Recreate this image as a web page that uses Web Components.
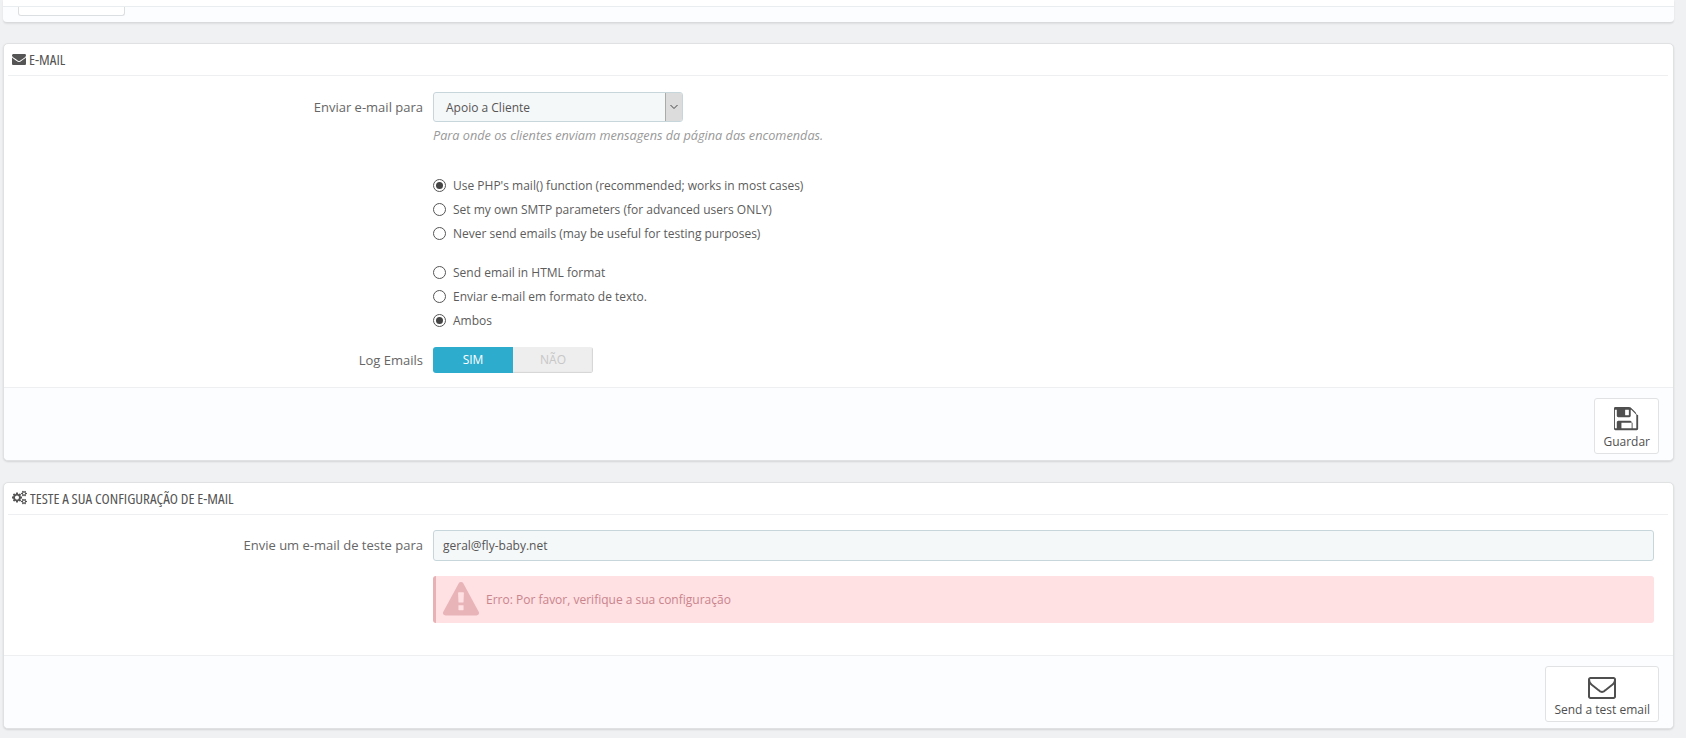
<!DOCTYPE html>
<html lang="pt">
<head>
<meta charset="utf-8">
<title>E-mail</title>
<style>
  html, body { margin: 0; background: #eff1f2; }
  body { font-family: "Open Sans", sans-serif; font-size: 12px; color: #555; height: 738px; overflow: hidden; }
  main { display: flex; flex-direction: column; padding: 0 12px 0 3px; }
</style>
</head>
<body>
<main>
  <top-strip></top-strip>

  <ps-panel style="margin-top:20px">
    <fa-icon slot="icon" name="envelope" size="14"></fa-icon>
    <span slot="title">E-mail</span>
    <form-row label="Enviar e-mail para" top="16">
      <fake-select value="Apoio a Cliente"></fake-select>
      <p class="help" style="margin:5px 0 0;font-style:italic;font-size:12.7px;line-height:17px;color:#999">Para onde os clientes enviam mensagens da página das encomendas.</p>
    </form-row>
    <form-row top="29">
      <radio-option checked>Use PHP's mail() function (recommended; works in most cases)</radio-option>
      <radio-option>Set my own SMTP parameters (for advanced users ONLY)</radio-option>
      <radio-option>Never send emails (may be useful for testing purposes)</radio-option>
    </form-row>
    <form-row top="15">
      <radio-option>Send email in HTML format</radio-option>
      <radio-option>Enviar e-mail em formato de texto.</radio-option>
      <radio-option checked>Ambos</radio-option>
    </form-row>
    <form-row label="Log Emails" top="15" bottom="14" lh="26">
      <yes-no></yes-no>
    </form-row>
    <ps-button slot="footer" icon="save" isize="26" ptop="7" gap="1">Guardar</ps-button>
  </ps-panel>

  <ps-panel style="margin-top:21px">
    <fa-icon slot="icon" name="cogs" size="15"></fa-icon>
    <span slot="title">Teste a sua configuração de e-mail</span>
    <form-row label="Envie um e-mail de teste para" top="15">
      <text-box value="geral@fly-baby.net"></text-box>
    </form-row>
    <form-row top="15" bottom="32">
      <error-alert>Erro: Por favor, verifique a sua configuração</error-alert>
    </form-row>
    <ps-button slot="footer" icon="envelope-o" isize="28" ptop="6" gap="0">Send a test email</ps-button>
  </ps-panel>
</main>

<script>
const ICONS = {
  envelope: ["0 0 1792 1792", "M1792 710v794q0 66-47 113t-113 47H160q-66 0-113-47T0 1504V710q44 49 101 87 362 246 497 345 57 42 92.5 65.5t94.5 48 110 24.5h2q51 0 110-24.5t94.5-48 92.5-65.5q170-123 498-345 57-39 100-87zm0-294q0 79-49 151t-122 123q-376 261-468 325-10 7-42.5 30.5t-54 38-52 32.5-57.5 27-50 9h-2q-23 0-50-9t-57.5-27-52-32.5-54-38T639 1015q-91-64-262-182.5T172 690q-62-42-117-115.5T0 438q0-78 41.5-130T160 256h1472q65 0 112.5 47t47.5 113z"],
  "envelope-o": ["0 0 1792 1792", "M1664 1504V736q-32 36-69 66-268 206-426 338-51 43-83 67t-86.5 48.5T897 1280h-2q-48 0-102.5-24.5t-86.5-48.5-83-67q-158-132-426-338-37-30-69-66v768q0 13 9.5 22.5T160 1536h1472q13 0 22.5-9.5t9.5-22.5zm0-1051v-24.5l-.5-13-3-12.5-5.5-9-9-7.5-14-2.5H160q-13 0-22.5 9.5T128 416q0 168 147 284 193 152 401 317 6 5 35 29.5t46 37.5 44.5 31.5T852 1143t43 9h2q20 0 43-9t50.5-27.5 44.5-31.5 46-37.5 35-29.5q208-165 401-317 54-43 100.5-115.5T1664 453zm128-37v1088q0 66-47 113t-113 47H160q-66 0-113-47T0 1504V416q0-66 47-113t113-47h1472q66 0 113 47t47 113z"],
  save: ["0 0 1792 1792", "M512 1536h768v-384H512v384zm896 0h128V640q0-14-10-38.5t-20-34.5l-281-281q-10-10-34-20t-39-10v416q0 40-28 68t-68 28H288q-40 0-68-28t-28-68V256H64v1280h128v-416q0-40 28-68t68-28h832q40 0 68 28t28 68v416zm-384-928V288q0-13-9.5-22.5T992 256H800q-13 0-22.5 9.5T768 288v320q0 13 9.5 22.5T800 640h192q13 0 22.5-9.5T1024 608zm640 32v928q0 40-28 68t-68 28H96q-40 0-68-28t-28-68V160q0-40 28-68t68-28h928q40 0 88 20t76 48l280 280q28 28 48 76t20 88z"],
  cogs: ["0 0 1920 1792", "M896 896q0-106-75-181t-181-75-181 75-75 181 75 181 181 75 181-75 75-181zm768 512q0-52-38-90t-90-38-90 38-38 90q0 53 37.5 90.5t90.5 37.5 90.5-37.5 37.5-90.5zm0-1024q0-52-38-90t-90-38-90 38-38 90q0 53 37.5 90.5t90.5 37.5 90.5-37.5 37.5-90.5zm-384 421v185q0 10-7 19.5t-16 10.5l-155 24q-11 35-32 76 34 48 90 115 7 11 7 20 0 12-7 19-23 30-82.5 89.5t-78.5 59.5q-11 0-21-7l-115-90q-37 19-77 31-11 108-23 155-7 24-30 24h-186q-11 0-20-7.5t-10-17.5l-23-153q-34-10-75-31l-118 89q-7 7-20 7-11 0-21-8-144-133-144-160 0-9 7-19 10-14 41-53t47-61q-23-44-35-82l-152-24q-10-1-17-9.5t-7-19.5v-185q0-10 7-19.5t16-10.5l155-24q11-35 32-76-34-48-90-115-7-11-7-20 0-12 7-20 22-30 82-89t79-59q11 0 21 7l115 90q34-18 77-32 11-108 23-154 7-24 30-24h186q11 0 20 7.5t10 17.5l23 153q34 10 75 31l118-89q8-7 20-7 11 0 21 8 144 133 144 160 0 8-7 19-12 16-42 54t-45 60q23 48 34 82l152 23q10 2 17 10.5t7 19.5zm640 533v140q0 16-149 31-12 27-30 52 51 113 51 138 0 4-4 7-122 71-124 71-8 0-46-47t-52-68q-20 2-30 2t-30-2q-14 21-52 68t-46 47q-2 0-124-71-4-3-4-7 0-25 51-138-18-25-30-52-149-15-149-31v-140q0-16 149-31 13-29 30-52-51-113-51-138 0-4 4-7 4-2 35-20t59-34 30-16q8 0 46 46.5t52 67.5q20-2 30-2t30 2q51-71 92-112l6-2q4 0 124 70 4 3 4 7 0 25-51 138 17 23 30 52 149 15 149 31zm0-1024v140q0 16-149 31-12 27-30 52 51 113 51 138 0 4-4 7-122 71-124 71-8 0-46-47t-52-68q-20 2-30 2t-30-2q-14 21-52 68t-46 47q-2 0-124-71-4-3-4-7 0-25 51-138-18-25-30-52-149-15-149-31V314q0-16 149-31 13-29 30-52-51-113-51-138 0-4 4-7 4-2 35-20t59-34 30-16q8 0 46 46.5t52 67.5q20-2 30-2t30 2q51-71 92-112l6-2q4 0 124 70 4 3 4 7 0 25-51 138 17 23 30 52 149 15 149 31z"],
  warning: ["0 0 1792 1792", "M1024 1375v-190q0-14-9.5-23.5t-22.5-9.5H800q-13 0-22.5 9.5T768 1185v190q0 14 9.5 23.5t22.5 9.5h192q13 0 22.5-9.5t9.5-23.5zm-2-374l18-459q0-12-10-19-13-11-24-11H786q-11 0-24 11-10 7-10 21l17 457q0 10 10 16.5t24 6.5h185q14 0 23.5-6.5t10.5-16.5zm-14-934l768 1408q35 63-2 126-17 29-46.5 46t-63.5 17H128q-34 0-63.5-17T18 1601q-37-63-2-126L784 67q17-31 47-49t65-18 65 18 47 49z"]
};

class FaIcon extends HTMLElement {
  connectedCallback() {
    const [box, d] = ICONS[this.getAttribute("name")];
    const size = this.getAttribute("size") || 16;
    this.attachShadow({ mode: "open" }).innerHTML = `
      <style>
        :host { display: inline-flex; line-height: 0; }
        svg { fill: currentColor; display: block; }
      </style>
      <svg width="${size}" height="${size}" viewBox="${box}"><path d="${d}"/></svg>
    `;
  }
}

class TopStrip extends HTMLElement {
  constructor() {
    super();
    this.attachShadow({ mode: "open" }).innerHTML = `
      <style>
        :host { display: block; height: 23px; overflow: hidden; background: #fcfdfe; border-bottom: 1px solid #d8dadc; border-radius: 0 0 4px 4px; box-sizing: border-box; box-shadow: 0 1px 2px rgba(0,0,0,.08); }
        .white { height: 6px; background: #fff; border-bottom: 1px solid #eaedef; }
        .btn { width: 105px; height: 8px; margin-left: 15px; background: #fff; border: 1px solid #dcdfe1; border-top: 0; border-radius: 0 0 3px 3px; }
      </style>
      <div class="white"></div>
      <div class="btn"></div>
    `;
  }
}

class PsPanel extends HTMLElement {
  constructor() {
    super();
    this.attachShadow({ mode: "open" }).innerHTML = `
      <style>
        :host { display: block; background: #fff; border: 1px solid #dfe1e3; border-radius: 5px; box-shadow: 0 1px 2px rgba(0,0,0,.12); overflow: hidden; }
        header { display: flex; align-items: center; gap: 3px; height: 29px; padding: 0 0 2px 4px; margin: 0 5px 0 4px; border-bottom: 1px solid #eeeff0; color: #555; box-sizing: content-box; }
        .title { font-family: "Liberation Sans Narrow", "Open Sans", sans-serif; font-stretch: condensed; font-size: 15px; text-transform: uppercase; }
        footer { display: flex; justify-content: flex-end; padding: 10px 14px 6px; background: #fcfdfe; border-top: 1px solid #eeeff0; }
      </style>
      <header><slot name="icon"></slot><span class="title"><slot name="title"></slot></span></header>
      <slot></slot>
      <footer><slot name="footer"></slot></footer>
    `;
  }
}

class FormRow extends HTMLElement {
  connectedCallback() {
    const top = this.getAttribute("top") || 0;
    const bottom = this.getAttribute("bottom") || 0;
    const lh = this.getAttribute("lh") || 30;
    this.attachShadow({ mode: "open" }).innerHTML = `
      <style>
        :host { display: grid; grid-template-columns: 419px 1fr; column-gap: 10px; padding: ${top}px 19px ${bottom}px 0; }
        .label { text-align: right; color: #666; font-size: 13px; line-height: ${lh}px; }
      </style>
      <div class="label">${this.getAttribute("label") || ""}</div>
      <div><slot></slot></div>
    `;
  }
}

class FakeSelect extends HTMLElement {
  connectedCallback() {
    this.attachShadow({ mode: "open" }).innerHTML = `
      <style>
        :host { display: flex; width: 250px; height: 30px; box-sizing: border-box; background: #f5f8f9; border: 1px solid #c7d6db; border-radius: 3px; color: #555; font-size: 12px; overflow: hidden; }
        .val { flex: 1; line-height: 29px; padding-left: 12px; }
        .arrow { width: 16px; display: flex; align-items: center; justify-content: center; background: #dcdcdc; border-left: 1px solid #aaa; }
      </style>
      <span class="val">${this.getAttribute("value")}</span>
      <span class="arrow"><svg width="10" height="6" viewBox="0 0 10 6"><path d="M1.5 1l3.5 3.5L8.5 1" fill="none" stroke="#444" stroke-width="1"/></svg></span>
    `;
  }
}

class RadioOption extends HTMLElement {
  connectedCallback() {
    const dot = this.hasAttribute("checked") ? `<span class="dot"></span>` : "";
    this.attachShadow({ mode: "open" }).innerHTML = `
      <style>
        :host { display: flex; align-items: center; height: 24px; gap: 7px; color: #5c5c5c; font-size: 12px; }
        .ring { width: 13px; height: 13px; box-sizing: border-box; border: 1px solid #555; border-radius: 50%; background: #fff; display: flex; align-items: center; justify-content: center; }
        .dot { width: 7px; height: 7px; border-radius: 50%; background: #444; }
      </style>
      <span class="ring">${dot}</span><span><slot></slot></span>
    `;
  }
}

class YesNo extends HTMLElement {
  constructor() {
    super();
    this.attachShadow({ mode: "open" }).innerHTML = `
      <style>
        :host { display: flex; width: 160px; height: 26px; border-radius: 3px; overflow: hidden; font-size: 12px; line-height: 26px; text-align: center; }
        .on { flex: 1; background: #2eacce; color: #fff; }
        .off { flex: 1; background: #eee; color: #c7c7c7; box-shadow: inset -1px -1px 1px #d4d4d4; }
      </style>
      <span class="on">SIM</span><span class="off">NÃO</span>
    `;
  }
}

class TextBox extends HTMLElement {
  connectedCallback() {
    this.attachShadow({ mode: "open" }).innerHTML = `
      <style>
        :host { display: block; height: 31px; box-sizing: border-box; background: #f5f8f9; border: 1px solid #c7d6db; border-radius: 3px; padding-left: 9px; line-height: 29px; font-size: 12px; color: #555; }
      </style>
      ${this.getAttribute("value")}
    `;
  }
}

class ErrorAlert extends HTMLElement {
  constructor() {
    super();
    this.attachShadow({ mode: "open" }).innerHTML = `
      <style>
        :host { display: flex; align-items: center; gap: 7px; height: 47px; box-sizing: border-box; padding-left: 7px; background: #ffe0e3; border-left: 3px solid #e8b1b6; border-radius: 3px; color: #c9848c; font-size: 12px; }
        fa-icon { color: #e8b4b8; }
      </style>
      <fa-icon name="warning" size="36"></fa-icon><span><slot></slot></span>
    `;
  }
}

class PsButton extends HTMLElement {
  connectedCallback() {
    const ptop = this.getAttribute("ptop") || 8;
    const gap = this.getAttribute("gap") || 0;
    this.attachShadow({ mode: "open" }).innerHTML = `
      <style>
        :host { display: inline-flex; flex-direction: column; align-items: center; gap: ${gap}px; box-sizing: border-box; height: 56px; padding: ${ptop}px 8px 0; background: #fff; border: 1px solid #e0e2e4; border-radius: 3px; color: #4f4f4f; font-size: 12px; }
        .txt { line-height: 18px; white-space: nowrap; }
      </style>
      <fa-icon name="${this.getAttribute("icon")}" size="${this.getAttribute("isize")}"></fa-icon>
      <span class="txt"><slot></slot></span>
    `;
  }
}

customElements.define("fa-icon", FaIcon);
customElements.define("top-strip", TopStrip);
customElements.define("ps-panel", PsPanel);
customElements.define("form-row", FormRow);
customElements.define("fake-select", FakeSelect);
customElements.define("radio-option", RadioOption);
customElements.define("yes-no", YesNo);
customElements.define("text-box", TextBox);
customElements.define("error-alert", ErrorAlert);
customElements.define("ps-button", PsButton);
</script>
</body>
</html>
